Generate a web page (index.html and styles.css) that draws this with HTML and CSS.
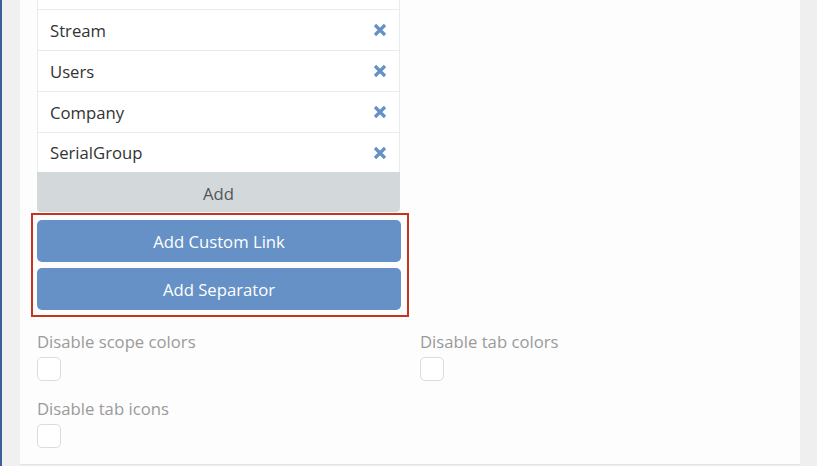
FILE: index.html
```html
<!DOCTYPE html>
<html>
<head>
<meta charset="utf-8">
<link rel="stylesheet" href="styles.css">
</head>
<body>
<div class="page">
  <div class="stripe"></div>
  <div class="gutter"></div>
  <div class="panel">
    <div class="list">
      <div class="item"></div>
      <div class="item"><span>Stream</span><span class="x"><svg width="14" height="14" viewBox="0 0 14 14"><path d="M2 2 L12 12 M12 2 L2 12" stroke="#6591c6" stroke-width="3.2"/></svg></span></div>
      <div class="item"><span>Users</span><span class="x"><svg width="14" height="14" viewBox="0 0 14 14"><path d="M2 2 L12 12 M12 2 L2 12" stroke="#6591c6" stroke-width="3.2"/></svg></span></div>
      <div class="item"><span>Company</span><span class="x"><svg width="14" height="14" viewBox="0 0 14 14"><path d="M2 2 L12 12 M12 2 L2 12" stroke="#6591c6" stroke-width="3.2"/></svg></span></div>
      <div class="item last"><span>SerialGroup</span><span class="x"><svg width="14" height="14" viewBox="0 0 14 14"><path d="M2 2 L12 12 M12 2 L2 12" stroke="#6591c6" stroke-width="3.2"/></svg></span></div>
      <div class="add">Add</div>
    </div>
    <div class="highlight">
      <div class="btn">Add Custom Link</div>
      <div class="btn">Add Separator</div>
    </div>
    <div class="fields">
      <div class="field">
        <div class="label">Disable scope colors</div>
        <div class="checkbox"></div>
      </div>
      <div class="field">
        <div class="label">Disable tab colors</div>
        <div class="checkbox"></div>
      </div>
      <div class="field">
        <div class="label">Disable tab icons</div>
        <div class="checkbox"></div>
      </div>
    </div>
  </div>
  <div class="side"></div>
</div>
</body>
</html>
```

FILE: styles.css
```css
html, body {
  margin: 0;
  padding: 0;
  height: 466px;
  overflow: hidden;
  background: #f0f0f0;
  font-family: "Open Sans", "Noto Sans", sans-serif;
}
.page {
  display: flex;
  height: 466px;
}
.stripe {
  width: 2px;
  background: #3f5f9b;
  flex: none;
}
.gutter {
  width: 18px;
  flex: none;
  background: #f0f0f0;
}
.panel {
  width: 763px;
  flex: none;
  background: #fdfdfd;
  padding: 0 0 0 17px;
  height: 464px;
  border-bottom: 1px solid #e4e4e4;
  box-shadow: 1px 0 1px #e2e2e2;
  overflow: hidden;
}
.side {
  flex: 1;
  background: #efefef;
}
.list {
  width: 363px;
  margin-top: -32px;
}
.item {
  height: 40px;
  border: 1px solid #e8ecee;
  border-bottom: none;
  background: #fff;
  display: flex;
  align-items: center;
  justify-content: space-between;
  padding: 0 12px;
  font-size: 16.7px;
  color: #333;
}
.item.last {
  height: 39px;
}
.x {
  display: flex;
  align-items: center;
  margin-right: 0;
}
.add {
  height: 40px;
  padding-top: 2px;
  box-sizing: border-box;
  background: #d3d9db;
  color: #555;
  font-size: 16.7px;
  display: flex;
  align-items: center;
  justify-content: center;
  border-radius: 0 0 4px 4px;
}
.highlight {
  width: 364px;
  margin: 1px 0 0 -6px;
  border: 2px solid #c6341f;
  padding: 5px 6px 5px 4px;
  display: flex;
  flex-direction: column;
  gap: 6px;
}
.btn {
  height: 42px;
  background: #6591c6;
  color: #fff;
  font-size: 16.7px;
  border-radius: 5px;
  display: flex;
  align-items: center;
  justify-content: center;
}
.fields {
  display: grid;
  grid-template-columns: 383px 1fr;
  row-gap: 16px;
  margin-top: 13px;
}
.label {
  font-size: 16.7px;
  color: #9a9a9a;
  line-height: 24px;
  height: 27px;
}
.checkbox {
  width: 22px;
  height: 22px;
  border: 1px solid #dcdcdc;
  border-radius: 5px;
  background: #fff;
}
```
